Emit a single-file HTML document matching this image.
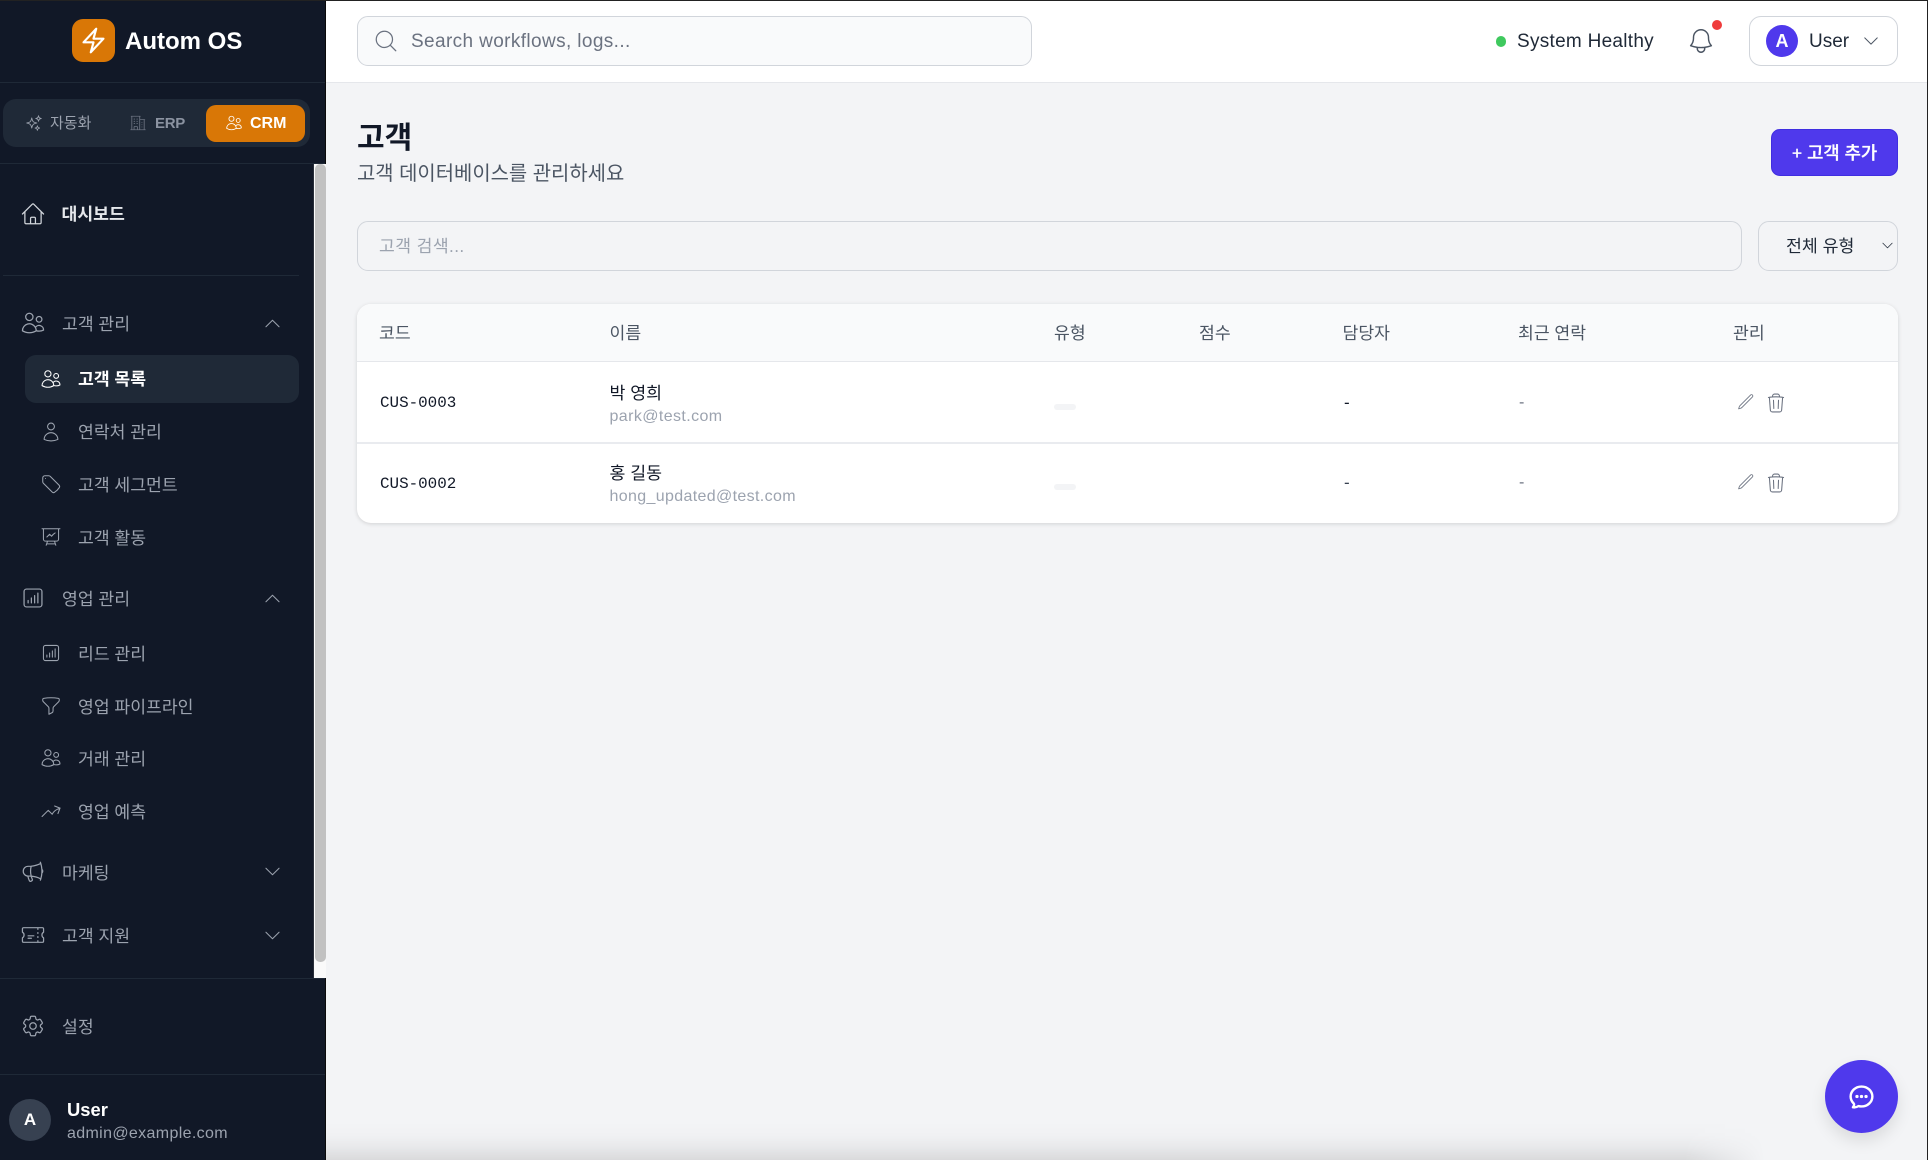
<!DOCTYPE html>
<html lang="ko"><head><meta charset="utf-8"><title>Autom OS</title>
<style>
*{box-sizing:border-box;margin:0;padding:0}
html,body{width:1928px;height:1160px;overflow:hidden;background:#f3f4f6}
body{position:relative;font-family:"Liberation Sans","Noto Sans CJK KR",sans-serif}
.a{position:absolute}
.t{position:absolute;white-space:nowrap;height:24px;line-height:24px}
svg{position:absolute;fill:none;stroke:currentColor;stroke-width:1.15;stroke-linecap:round;stroke-linejoin:round;overflow:visible}
.nav{color:#9ca3af;font-size:17.2px;margin-top:1.2px}
.sub{color:#9ca3af;font-size:17.2px;margin-top:1.2px}
.th{color:#4b5563;font-size:17.2px}
</style></head><body>
<svg width="0" height="0" style="position:absolute">
<defs>
<symbol id="bolt" viewBox="0 0 24 24"><path d="M3.75 13.5l10.5-11.25L12 10.5h8.25L9.75 21.75 12 13.5H3.75z"/></symbol>
<symbol id="spark" viewBox="0 0 24 24"><path d="M9.813 15.904L9 18.75l-.813-2.846a4.5 4.5 0 00-3.09-3.09L2.25 12l2.846-.813a4.5 4.5 0 003.09-3.09L9 5.25l.813 2.846a4.5 4.5 0 003.09 3.09L15.75 12l-2.846.813a4.5 4.5 0 00-3.09 3.09zM18.259 8.715L18 9.75l-.259-1.035a3.375 3.375 0 00-2.455-2.456L14.25 6l1.036-.259a3.375 3.375 0 002.455-2.456L18 2.25l.259 1.035a3.375 3.375 0 002.456 2.456L21.75 6l-1.035.259a3.375 3.375 0 00-2.456 2.456zM16.894 20.567L16.5 21.75l-.394-1.183a2.25 2.25 0 00-1.423-1.423L13.5 18.75l1.183-.394a2.25 2.25 0 001.423-1.423l.394-1.183.394 1.183a2.25 2.25 0 001.423 1.423l1.183.394-1.183.394a2.25 2.25 0 00-1.423 1.423z"/></symbol>
<symbol id="bld" viewBox="0 0 24 24"><path d="M2.25 21h19.5m-18-18v18m10.5-18v18m6-13.5V21M6.75 6.75h.75m-.75 3h.75m-.75 3h.75m3-6h.75m-.75 3h.75m-.75 3h.75M6.75 21v-3.375c0-.621.504-1.125 1.125-1.125h2.25c.621 0 1.125.504 1.125 1.125V21M3 3h12m-.75 4.5H21m-3.75 3.75h.008v.008h-.008v-.008zm0 3h.008v.008h-.008v-.008zm0 3h.008v.008h-.008v-.008z"/></symbol>
<symbol id="users" viewBox="0 0 24 24"><path d="M15 19.128a9.38 9.38 0 002.625.372 9.337 9.337 0 004.121-.952 4.125 4.125 0 00-7.533-2.493M15 19.128v-.003c0-1.113-.285-2.16-.786-3.07M15 19.128v.106A12.318 12.318 0 018.624 21c-2.331 0-4.512-.645-6.374-1.766l-.001-.109a6.375 6.375 0 0111.964-3.07M12 6.375a3.375 3.375 0 11-6.75 0 3.375 3.375 0 016.75 0zm8.25 2.25a2.625 2.625 0 11-5.25 0 2.625 2.625 0 015.25 0z"/></symbol>
<symbol id="home" viewBox="0 0 24 24"><path d="M2.25 12l8.954-8.955c.44-.439 1.152-.439 1.591 0L21.75 12M4.5 9.75v10.125c0 .621.504 1.125 1.125 1.125H9.75v-4.875c0-.621.504-1.125 1.125-1.125h2.25c.621 0 1.125.504 1.125 1.125V21h4.125c.621 0 1.125-.504 1.125-1.125V9.75M8.25 21h8.25"/></symbol>
<symbol id="user" viewBox="0 0 24 24"><path d="M15.75 6a3.75 3.75 0 11-7.5 0 3.75 3.75 0 017.5 0zM4.501 20.118a7.5 7.5 0 0114.998 0A17.933 17.933 0 0112 21.75c-2.676 0-5.216-.584-7.499-1.632z"/></symbol>
<symbol id="tag" viewBox="0 0 24 24"><path d="M9.568 3H5.25A2.25 2.25 0 003 5.25v4.318c0 .597.237 1.17.659 1.591l9.581 9.581c.699.699 1.78.872 2.607.33a18.095 18.095 0 005.223-5.223c.542-.827.369-1.908-.33-2.607L11.16 3.66A2.25 2.25 0 009.568 3zM6 6h.008v.008H6V6z"/></symbol>
<symbol id="pres" viewBox="0 0 24 24"><path d="M3.75 3v11.25A2.25 2.25 0 006 16.5h2.25M3.75 3h-1.5m1.5 0h16.5m0 0h1.5m-1.5 0v11.25A2.25 2.25 0 0118 16.5h-2.25m-7.5 0h7.5m-7.5 0l-1 3m8.5-3l1 3m0 0l.5 1.5m-.5-1.5h-9.5m0 0l-.5 1.5m.75-9l3-3 2.148 2.148A12.061 12.061 0 0116.5 7.605"/></symbol>
<symbol id="chart" viewBox="0 0 24 24"><path d="M7.5 14.25v2.25m3-4.5v4.5m3-6.75v6.75m3-9v9M6 20.25h12A2.25 2.25 0 0020.25 18V6A2.25 2.25 0 0018 3.75H6A2.25 2.25 0 003.75 6v12A2.25 2.25 0 006 20.25z"/></symbol>
<symbol id="funnel" viewBox="0 0 24 24"><path d="M12 3c2.755 0 5.455.232 8.083.678.533.09.917.556.917 1.096v1.044a2.25 2.25 0 01-.659 1.591l-5.432 5.432a2.25 2.25 0 00-.659 1.591v2.927a2.25 2.25 0 01-1.244 2.013L9.75 21v-6.568a2.25 2.25 0 00-.659-1.591L3.659 7.409A2.25 2.25 0 013 5.818V4.774c0-.54.384-1.006.917-1.096A48.32 48.32 0 0112 3z"/></symbol>
<symbol id="trend" viewBox="0 0 24 24"><path d="M2.25 18L9 11.25l4.306 4.307a11.95 11.95 0 015.814-5.519l2.74-1.22m0 0l-5.94-2.28m5.94 2.28l-2.28 5.941"/></symbol>
<symbol id="mega" viewBox="0 0 24 24"><path d="M10.34 15.84c-.688-.06-1.386-.09-2.09-.09H7.5a4.5 4.5 0 110-9h.75c.704 0 1.402-.03 2.09-.09m0 9.18c.253.962.584 1.892.985 2.783.247.55.06 1.21-.463 1.511l-.657.38c-.551.318-1.26.117-1.527-.461a20.845 20.845 0 01-1.44-4.282m3.102.069a18.03 18.03 0 01-.59-4.59c0-1.586.205-3.124.59-4.59m0 9.18a23.848 23.848 0 018.835 2.535M10.34 6.66a23.847 23.847 0 008.835-2.535m0 0A23.74 23.74 0 0018.795 3m.38 1.125a23.91 23.91 0 011.014 5.395m-1.014 8.855c-.118.38-.245.754-.38 1.125m.38-1.125a23.91 23.91 0 001.014-5.395m0-3.46c.495.413.811 1.035.811 1.73 0 .695-.316 1.317-.811 1.73m0-3.46a24.347 24.347 0 010 3.46"/></symbol>
<symbol id="ticket" viewBox="0 0 24 24"><path d="M16.5 6v.75m0 3v.75m0 3v.75m0 3V18m-9-5.25h5.25M7.5 15h3M3.375 5.25c-.621 0-1.125.504-1.125 1.125v3.026a2.999 2.999 0 010 5.198v3.026c0 .621.504 1.125 1.125 1.125h17.25c.621 0 1.125-.504 1.125-1.125v-3.026a2.999 2.999 0 010-5.198V6.375c0-.621-.504-1.125-1.125-1.125H3.375z"/></symbol>
<symbol id="cog" viewBox="0 0 24 24"><path d="M9.594 3.94c.09-.542.56-.94 1.11-.94h2.593c.55 0 1.02.398 1.11.94l.213 1.281c.063.374.313.686.645.87.074.04.147.083.22.127.324.196.72.257 1.075.124l1.217-.456a1.125 1.125 0 011.37.49l1.296 2.247a1.125 1.125 0 01-.26 1.431l-1.003.827c-.293.24-.438.613-.431.992a6.759 6.759 0 010 .255c-.007.378.138.75.43.99l1.005.828c.424.35.534.954.26 1.43l-1.298 2.247a1.125 1.125 0 01-1.369.491l-1.217-.456c-.355-.133-.75-.072-1.076.124a6.57 6.57 0 01-.22.128c-.331.183-.581.495-.644.869l-.213 1.28c-.09.543-.56.941-1.11.941h-2.594c-.55 0-1.02-.398-1.11-.94l-.213-1.281c-.062-.374-.312-.686-.644-.87a6.52 6.52 0 01-.22-.127c-.325-.196-.72-.257-1.076-.124l-1.217.456a1.125 1.125 0 01-1.369-.49l-1.297-2.247a1.125 1.125 0 01.26-1.431l1.004-.827c.292-.24.437-.613.43-.992a6.932 6.932 0 010-.255c.007-.378-.138-.75-.43-.99l-1.004-.828a1.125 1.125 0 01-.26-1.43l1.297-2.247a1.125 1.125 0 011.37-.491l1.216.456c.356.133.751.072 1.076-.124.072-.044.146-.087.22-.128.332-.183.582-.495.644-.869l.214-1.281zM15 12a3 3 0 11-6 0 3 3 0 016 0z"/></symbol>
<symbol id="bell" viewBox="0 0 24 24"><path d="M14.857 17.082a23.848 23.848 0 005.454-1.31A8.967 8.967 0 0118 9.75v-.7V9A6 6 0 006 9v.75a8.967 8.967 0 01-2.312 6.022c1.733.64 3.56 1.085 5.455 1.31m5.714 0a24.255 24.255 0 01-5.714 0m5.714 0a3 3 0 11-5.714 0"/></symbol>
<symbol id="search" viewBox="0 0 24 24"><path d="M21 21l-5.197-5.197m0 0A7.5 7.5 0 105.196 5.196a7.5 7.5 0 0010.607 10.607z"/></symbol>
<symbol id="pencil" viewBox="0 0 24 24"><path d="M16.862 4.487l1.687-1.688a1.875 1.875 0 112.652 2.652L6.832 19.82a4.5 4.5 0 01-1.897 1.13l-2.685.8.8-2.685a4.5 4.5 0 011.13-1.897L16.863 4.487z"/></symbol>
<symbol id="trash" viewBox="0 0 24 24"><path d="M14.74 9l-.346 9m-4.788 0L9.26 9m9.968-3.21c.342.052.682.107 1.022.166m-1.022-.165L18.16 19.673a2.25 2.25 0 01-2.244 2.077H8.084a2.25 2.25 0 01-2.244-2.077L4.772 5.79m14.456 0a48.108 48.108 0 00-3.478-.397m-12 .562c.34-.059.68-.114 1.022-.165m0 0a48.11 48.11 0 013.478-.397m7.5 0v-.916c0-1.18-.91-2.164-2.09-2.201a51.964 51.964 0 00-3.32 0c-1.18.037-2.09 1.022-2.09 2.201v.916m7.5 0a48.667 48.667 0 00-7.5 0"/></symbol>
<symbol id="chat" viewBox="0 0 24 24"><path d="M8.625 12a.375.375 0 11-.75 0 .375.375 0 01.75 0zm0 0H8.25m4.125 0a.375.375 0 11-.75 0 .375.375 0 01.75 0zm0 0H12m4.125 0a.375.375 0 11-.75 0 .375.375 0 01.75 0zm0 0h-.375M21 12c0 4.556-4.03 8.25-9 8.25a9.764 9.764 0 01-2.555-.337A5.972 5.972 0 015.41 20.97a5.969 5.969 0 01-.474-.065 4.48 4.48 0 00.978-2.025c.09-.457-.133-.901-.467-1.226C3.93 16.178 3 14.189 3 12c0-4.556 4.03-8.25 9-8.25s9 3.694 9 8.25z"/></symbol>
<symbol id="up" viewBox="0 0 24 24"><path d="M4.5 15.75l7.5-7.5 7.5 7.5"/></symbol>
<symbol id="down" viewBox="0 0 24 24"><path d="M19.5 8.25l-7.5 7.5-7.5-7.5"/></symbol>
</defs></svg>

<!-- bottom fade -->
<div class="a" style="left:300px;top:1122px;width:1465px;height:38px;background:linear-gradient(180deg,rgba(0,0,0,0) 0%,rgba(0,0,0,.012) 35%,rgba(0,0,0,.045) 65%,rgba(0,0,0,.105) 100%);-webkit-mask-image:linear-gradient(90deg,#000 0,#000 1385px,transparent 1465px);mask-image:linear-gradient(90deg,#000 0,#000 1385px,transparent 1465px)"></div>

<!-- header -->
<div class="a" style="left:325px;top:0;width:1603px;height:83px;background:#fff;border-bottom:1.5px solid #e5e7eb"></div>
<div class="a" style="left:357px;top:16px;width:675px;height:50px;background:#f9fafb;border:1.5px solid #d1d5db;border-radius:11px"></div>
<svg style="left:373px;top:28px;color:#6b7280" width="26" height="26"><use href="#search"/></svg>
<div class="t" style="left:411px;top:30px;font-size:19px;letter-spacing:.38px;color:#6b7280">Search workflows, logs...</div>
<div class="a" style="left:1495.5px;top:36px;width:10.5px;height:10.5px;border-radius:50%;background:#3fc95e"></div>
<div class="t" style="left:1517px;top:30px;font-size:19px;letter-spacing:.28px;color:#1f2937">System Healthy</div>
<svg style="left:1686px;top:26px;color:#4b5563" width="30" height="30"><use href="#bell"/></svg>
<div class="a" style="left:1712px;top:20px;width:10px;height:10px;border-radius:50%;background:#ef3b3b"></div>
<div class="a" style="left:1749px;top:16px;width:149px;height:50px;background:#fff;border:1.5px solid #d1d5db;border-radius:12px"></div>
<div class="a" style="left:1766px;top:25px;width:32px;height:32px;border-radius:50%;background:#4f39ec"></div>
<div class="t" style="left:1766px;width:32px;text-align:center;top:29px;font-size:18px;font-weight:700;color:#fff">A</div>
<div class="t" style="left:1809px;top:30px;font-size:19px;color:#1f2937">User</div>
<svg style="left:1861px;top:31px;color:#4b5563" width="20" height="20"><use href="#down"/></svg>

<!-- page head -->
<div class="t" style="left:357px;top:123px;height:32px;line-height:32px;font-size:30px;font-weight:700;color:#111827">고객</div>
<div class="t" style="left:357px;top:161.5px;font-size:19.9px;color:#4b5563">고객 데이터베이스를 관리하세요</div>
<div class="a" style="left:1771px;top:129px;width:127px;height:47px;background:#4f39ec;border-radius:9px;border:1px solid #3f2ee0"></div>
<div class="t" style="left:1771px;width:127px;text-align:center;top:141px;font-size:17.7px;font-weight:500;color:#fff;-webkit-text-stroke:.3px #fff">+ 고객 추가</div>

<!-- filters -->
<div class="a" style="left:357px;top:221px;width:1385px;height:50px;background:#f3f4f6;border:1.5px solid #d1d5db;border-radius:11px"></div>
<div class="t" style="left:379px;top:234px;font-size:17.2px;letter-spacing:.4px;color:#9ca3af">고객 검색...</div>
<div class="a" style="left:1758px;top:221px;width:140px;height:50px;background:#f3f4f6;border:1.5px solid #d1d5db;border-radius:11px"></div>
<div class="t" style="left:1786px;top:234px;font-size:17.3px;color:#1f2937">전체 유형</div>
<svg style="left:1879.500px;top:238px;color:#1f2937" width="15" height="15"><use href="#down"/></svg>

<!-- table -->
<div class="a" style="left:357px;top:304px;width:1541px;height:219px;background:#fff;border-radius:14px;box-shadow:0 1px 4px rgba(0,0,0,.14);overflow:hidden">
 <div class="a" style="left:0;top:0;width:100%;height:58px;background:#f9fafb;border-bottom:1.5px solid #e5e7eb"></div>
 <div class="a" style="left:0;top:138px;width:100%;height:2px;background:#e9ebef"></div>
</div>
<div class="t th" style="left:379px;top:321px">코드</div>
<div class="t th" style="left:609.500px;top:321px">이름</div>
<div class="t th" style="left:1054px;top:321px">유형</div>
<div class="t th" style="left:1199px;top:321px">점수</div>
<div class="t th" style="left:1342.500px;top:321px">담당자</div>
<div class="t th" style="left:1518px;top:321px">최근 연락</div>
<div class="t th" style="left:1733px;top:321px">관리</div>

<div class="t" style="left:380px;top:391px;font-family:'Liberation Mono','Noto Sans CJK KR',monospace;font-size:15.9px;color:#111827">CUS-0003</div>
<div class="t" style="left:609.500px;top:380.500px;font-size:17.3px;color:#111827">박 영희</div>
<div class="t" style="left:609.500px;top:405px;font-size:16px;letter-spacing:.4px;color:#9ca3af">park@test.com</div>
<div class="a" style="left:1054px;top:404px;width:22px;height:6px;border-radius:3px;background:#f3f4f6"></div>
<div class="t" style="left:1344px;top:391px;font-size:17px;color:#111827">-</div>
<div class="t" style="left:1519px;top:391px;font-size:16px;color:#6b7280">-</div>
<svg style="left:1737px;top:393px;color:#6b7280" width="17.5" height="17.5"><use href="#pencil"/></svg>
<svg style="left:1765px;top:392px;color:#6b7280" width="22" height="22"><use href="#trash"/></svg>

<div class="t" style="left:380px;top:471.500px;font-family:'Liberation Mono','Noto Sans CJK KR',monospace;font-size:15.9px;color:#111827">CUS-0002</div>
<div class="t" style="left:609.500px;top:460.500px;font-size:17.3px;color:#111827">홍 길동</div>
<div class="t" style="left:609.500px;top:485px;font-size:16px;letter-spacing:.35px;color:#9ca3af">hong_updated@test.com</div>
<div class="a" style="left:1054px;top:484px;width:22px;height:6px;border-radius:3px;background:#f3f4f6"></div>
<div class="t" style="left:1344px;top:471px;font-size:17px;color:#374151">-</div>
<div class="t" style="left:1519px;top:471px;font-size:16px;color:#6b7280">-</div>
<svg style="left:1737px;top:473px;color:#6b7280" width="17.5" height="17.5"><use href="#pencil"/></svg>
<svg style="left:1765px;top:472px;color:#6b7280" width="22" height="22"><use href="#trash"/></svg>

<!-- chat fab -->
<div class="a" style="left:1824.5px;top:1059.5px;width:73px;height:73px;border-radius:50%;background:#4f39ec;box-shadow:0 8px 16px rgba(0,0,0,.1)"></div>
<svg style="left:1846.500px;top:1081.500px;color:#fff;stroke-width:2" width="29" height="29"><use href="#chat"/></svg>

<!-- sidebar -->
<div class="a" style="left:0;top:0;width:326px;height:1160px;background:#111827;border-right:1px solid #0a0a0a"></div>
<div class="a" style="left:0;top:82px;width:325px;height:1px;background:#1f2937"></div>
<div class="a" style="left:72px;top:19px;width:43px;height:43px;border-radius:11px;background:#d97706"></div>
<svg style="left:79px;top:26px;color:#fff;stroke-width:1.8" width="29" height="29"><use href="#bolt"/></svg>
<div class="t" style="left:125px;top:30px;font-size:24px;font-weight:700;color:#fff">Autom OS</div>

<div class="a" style="left:3px;top:99px;width:307px;height:48px;border-radius:13px;background:#1f2937"></div>
<div class="a" style="left:206px;top:105px;width:99px;height:37px;border-radius:10px;background:#d97706"></div>
<svg style="left:25px;top:114px;color:#9ca3af" width="18" height="18"><use href="#spark"/></svg>
<div class="t" style="left:50px;top:112px;font-size:15px;color:#9ca3af">자동화</div>
<svg style="left:128.500px;top:114px;color:#6b7280" width="18" height="18"><use href="#bld"/></svg>
<div class="t" style="left:155px;top:112px;font-size:15px;letter-spacing:-.3px;font-weight:700;color:#8b93a1">ERP</div>
<svg style="left:224.500px;top:114px;color:#fff" width="18" height="18"><use href="#users"/></svg>
<div class="t" style="left:250px;top:112px;font-size:16px;font-weight:700;color:#fff">CRM</div>
<div class="a" style="left:0;top:163px;width:325px;height:1px;background:#1f2937"></div>

<!-- scrollbar -->
<div class="a" style="left:313px;top:164px;width:13px;height:814px;background:#fafafa;border-left:1px solid #2a2f3a"></div>
<div class="a" style="left:315px;top:164px;width:10.5px;height:798px;border-radius:5px;background:#c1c1c1"></div>

<!-- nav -->
<svg style="left:19.500px;top:200.500px;color:#d1d5db" width="26" height="26"><use href="#home"/></svg>
<div class="t nav" style="left:61.500px;top:201px;color:#e5e7eb;font-weight:700">대시보드</div>
<div class="a" style="left:3px;top:275px;width:296px;height:1px;background:#1f2937"></div>

<svg style="left:19.500px;top:310px;color:#9ca3af" width="26" height="26"><use href="#users"/></svg>
<div class="t nav" style="left:62px;top:311px">고객 관리</div>
<svg style="left:262px;top:313px;color:#9ca3af" width="21" height="21"><use href="#up"/></svg>

<div class="a" style="left:25px;top:355px;width:274px;height:48px;border-radius:11px;background:#1f2937"></div>
<svg style="left:40px;top:368px;color:#fff" width="22" height="22"><use href="#users"/></svg>
<div class="t sub" style="left:78px;top:366px;color:#fff;font-weight:700">고객 목록</div>
<svg style="left:40px;top:421px;color:#9ca3af" width="22" height="22"><use href="#user"/></svg>
<div class="t sub" style="left:78px;top:419px">연락처 관리</div>
<svg style="left:40px;top:473px;color:#9ca3af" width="22" height="22"><use href="#tag"/></svg>
<div class="t sub" style="left:78px;top:472px">고객 세그먼트</div>
<svg style="left:40px;top:526px;color:#9ca3af" width="22" height="22"><use href="#pres"/></svg>
<div class="t sub" style="left:78px;top:525px">고객 활동</div>

<svg style="left:19.500px;top:585px;color:#9ca3af" width="26" height="26"><use href="#chart"/></svg>
<div class="t nav" style="left:62px;top:586px">영업 관리</div>
<svg style="left:262px;top:588px;color:#9ca3af" width="21" height="21"><use href="#up"/></svg>

<svg style="left:40px;top:642px;color:#9ca3af" width="22" height="22"><use href="#chart"/></svg>
<div class="t sub" style="left:78px;top:641px">리드 관리</div>
<svg style="left:40px;top:695px;color:#9ca3af" width="22" height="22"><use href="#funnel"/></svg>
<div class="t sub" style="left:78px;top:694px">영업 파이프라인</div>
<svg style="left:40px;top:747px;color:#9ca3af" width="22" height="22"><use href="#users"/></svg>
<div class="t sub" style="left:78px;top:746px">거래 관리</div>
<svg style="left:40px;top:800px;color:#9ca3af" width="22" height="22"><use href="#trend"/></svg>
<div class="t sub" style="left:78px;top:799px">영업 예측</div>

<svg style="left:19.500px;top:859px;color:#9ca3af" width="26" height="26"><use href="#mega"/></svg>
<div class="t nav" style="left:62px;top:860px">마케팅</div>
<svg style="left:262px;top:861px;color:#9ca3af" width="21" height="21"><use href="#down"/></svg>

<svg style="left:19.500px;top:922px;color:#9ca3af" width="26" height="26"><use href="#ticket"/></svg>
<div class="t nav" style="left:62px;top:923px">고객 지원</div>
<svg style="left:262px;top:925px;color:#9ca3af" width="21" height="21"><use href="#down"/></svg>

<div class="a" style="left:0;top:978px;width:325px;height:1px;background:#1f2937"></div>
<svg style="left:19.500px;top:1013px;color:#9ca3af" width="26" height="26"><use href="#cog"/></svg>
<div class="t nav" style="left:62px;top:1014px">설정</div>
<div class="a" style="left:0;top:1074px;width:325px;height:1px;background:#1f2937"></div>

<div class="a" style="left:9px;top:1099px;width:42px;height:42px;border-radius:50%;background:#374151"></div>
<div class="t" style="left:9px;width:42px;text-align:center;top:1108px;font-size:17px;font-weight:700;color:#fff">A</div>
<div class="t" style="left:67px;top:1098px;font-size:18.4px;font-weight:700;color:#fff">User</div>
<div class="t" style="left:67px;top:1122px;font-size:16px;letter-spacing:.35px;color:#9ca3af">admin@example.com</div>

<!-- window edges -->
<div class="a" style="left:0;top:0;width:1928px;height:1px;background:#222"></div>
<div class="a" style="left:1927px;top:0;width:1px;height:1160px;background:#222"></div>
</body></html>
